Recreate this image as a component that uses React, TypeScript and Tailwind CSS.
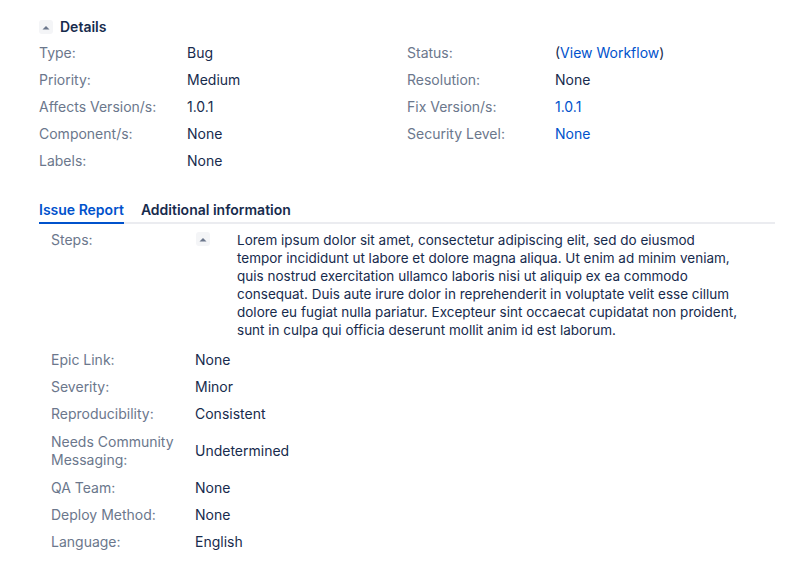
import { useState } from 'react';

type Field = { label: string; value: string; link?: boolean; wrap?: string; tall?: boolean };

const left: Field[] = [
  { label: 'Type:', value: 'Bug' },
  { label: 'Priority:', value: 'Medium' },
  { label: 'Affects Version/s:', value: '1.0.1' },
  { label: 'Component/s:', value: 'None' },
  { label: 'Labels:', value: 'None' },
];

const right: Field[] = [
  { label: 'Status:', value: 'View Workflow', wrap: 'paren' },
  { label: 'Resolution:', value: 'None' },
  { label: 'Fix Version/s:', value: '1.0.1', link: true },
  { label: 'Security Level:', value: 'None', link: true },
];

const extra: Field[] = [
  { label: 'Epic Link:', value: 'None' },
  { label: 'Severity:', value: 'Minor' },
  { label: 'Reproducibility:', value: 'Consistent' },
  { label: 'Needs Community Messaging:', value: 'Undetermined', tall: true },
  { label: 'QA Team:', value: 'None' },
  { label: 'Deploy Method:', value: 'None' },
  { label: 'Language:', value: 'English' },
];

// line breaks kept as in the original rendering
const steps = [
  'Lorem ipsum dolor sit amet, consectetur adipiscing elit, sed do eiusmod',
  'tempor incididunt ut labore et dolore magna aliqua. Ut enim ad minim veniam,',
  'quis nostrud exercitation ullamco laboris nisi ut aliquip ex ea commodo',
  'consequat. Duis aute irure dolor in reprehenderit in voluptate velit esse cillum',
  'dolore eu fugiat nulla pariatur. Excepteur sint occaecat cupidatat non proident,',
  'sunt in culpa qui officia deserunt mollit anim id est laborum.',
];

function Toggle() {
  return (
    <span className="flex h-[14px] w-[14px] shrink-0 items-center justify-center rounded-[3px] bg-[#f4f5f7]">
      <svg width="8" height="5" viewBox="0 0 8 5">
        <path d="M0.5 4.5 L4 1 L7.5 4.5 Z" fill="#6b778c" />
      </svg>
    </span>
  );
}

function Value({ f }: { f: Field }) {
  if (f.wrap === 'paren') {
    return (
      <span className="text-[#172b4d]">
        (<span className="text-[#0052cc]">{f.value}</span>)
      </span>
    );
  }
  return <span className={f.link ? 'text-[#0052cc]' : 'text-[#172b4d]'}>{f.value}</span>;
}

function DetailRow({ f }: { f: Field }) {
  return (
    <div className="flex h-[27px] items-center">
      <div className="w-[148px] shrink-0 text-[#6b778c]">{f.label}</div>
      <Value f={f} />
    </div>
  );
}

export default function App() {
  const [tab, setTab] = useState(0);
  const tabs = ['Issue Report', 'Additional information'];

  return (
    <div
      className="min-h-[575px] w-[796px] bg-white pl-[39px] pr-[21px] text-[14px] leading-[18px]"
      style={{ fontFamily: 'Inter, "Noto Sans", sans-serif' }}
    >
      <div className="flex items-center gap-[7px] pt-[18px]">
        <Toggle />
        <h2 className="text-[14px] font-semibold text-[#172b4d]">Details</h2>
      </div>

      <div className="mt-[3px] grid grid-cols-2">
        <div>
          {left.map((f) => (
            <DetailRow key={f.label} f={f} />
          ))}
        </div>
        <div>
          {right.map((f) => (
            <DetailRow key={f.label} f={f} />
          ))}
        </div>
      </div>

      <div className="mt-[26px] flex gap-[17px] border-b-2 border-[#ebecf0]">
        {tabs.map((t, i) => (
          <button
            key={t}
            onClick={() => setTab(i)}
            className={`-mb-[2px] border-b-2 pb-[3px] pt-[1px] font-semibold ${
              tab === i ? 'border-[#0052cc] text-[#0052cc]' : 'border-transparent text-[#172b4d]'
            }`}
          >
            {t}
          </button>
        ))}
      </div>

      <div className="pl-[12px]">
        <div className="flex pb-[7px] pt-[7px]">
          <div className="w-[145px] shrink-0 text-[#6b778c]">Steps:</div>
          <div className="pt-[1px]">
            <Toggle />
          </div>
          <p className="ml-[27px] text-[13.5px] whitespace-nowrap text-[#172b4d]">
            {steps.map((l) => (
              <span key={l} className="block">
                {l}
              </span>
            ))}
          </p>
        </div>

        {extra.map((f) => (
          <div key={f.label} className={`flex items-center ${f.tall ? 'py-[5.5px]' : 'py-[4.5px]'}`}>
            <div className="w-[144px] shrink-0 pr-[8px] text-[#6b778c]">{f.label}</div>
            <Value f={f} />
          </div>
        ))}
      </div>
    </div>
  );
}
